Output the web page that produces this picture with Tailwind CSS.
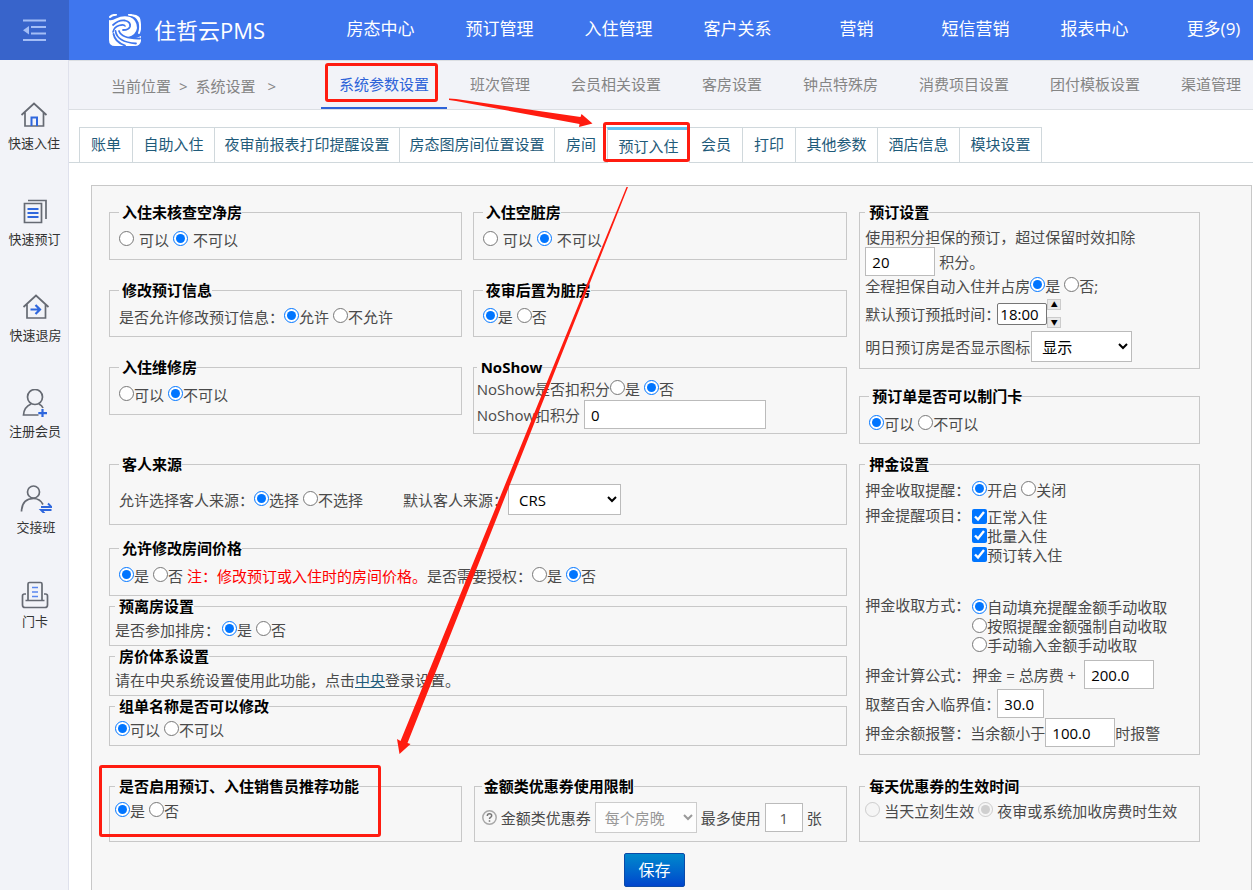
<!DOCTYPE html>
<html lang="zh-CN">
  <head>
    <meta charset="UTF-8" />
    <meta name="viewport" content="width=device-width, initial-scale=1.0" />
    <title>住哲云PMS - 系统参数设置</title>
    <script src="https://cdn.jsdelivr.net/npm/@tailwindcss/browser@4"></script>
  </head>
  <body
    class="relative flex flex-col h-screen overflow-hidden bg-white text-[15px] leading-[22px] text-[#4a4a4a] whitespace-nowrap font-['Open_Sans','Noto_Sans_CJK_SC',sans-serif]"
  >
    <!-- header -->
    <header class="flex items-center h-[60px] shrink-0 bg-[#3f76ee] text-white">
      <button class="flex items-center justify-center w-[69px] h-full shrink-0 bg-[#3864cb]" aria-label="收起菜单">
        <svg class="w-6 h-6" viewBox="0 0 24 24" fill="none" stroke="#a3bdf6" stroke-width="1.8">
          <path d="M0 2.500h23M8 9h15M8 15.500h15M0 22h23" />
          <path d="M6 8v8.500L0 12.200z" fill="#a3bdf6" stroke="none" />
        </svg>
      </button>
      <a href="#" class="flex items-center gap-[13px] w-[252px] pl-10 shrink-0">
        <svg class="w-8 h-8" viewBox="0 0 32 32" fill="none" stroke-linecap="round">
          <path d="M0 6Q3 7 7 4.500Q14 1 21 3Q28 6 28 14Q27 21 19 23Q25 26 32 22V27Q31 32 26 32H6Q0 32 0 26z" fill="#fff" />
          <path d="M1 3Q3 0.800 7 0.800M20 0.800Q28 1 30.500 8Q32 14 30 19" stroke="#fff" stroke-width="2" />
          <path d="M24 0.500Q31 1 31.500 6V22Q32 14 30 8Q28 3 24 0.500z" fill="#fff" />
          <path d="M4 11Q10 5.500 16 6.500Q22 8 21 12.500Q20 16 14 16" stroke="#3f76ee" stroke-width="1.800" />
          <path d="M4 18Q5 13 10 11.500Q15 10 16 12" stroke="#3f76ee" stroke-width="1.600" />
          <path d="M10 17Q13 25 31 24.500" stroke="#3f76ee" stroke-width="1.800" />
          <path d="M6.500 17Q8 28 27 29.500" stroke="#3f76ee" stroke-width="1.800" />
          <path d="M4.500 20Q6 28 16 31.500" stroke="#3f76ee" stroke-width="1.800" />
        </svg>
        <span class="text-[22px] leading-[30px]">住哲云PMS</span>
      </a>
      <nav class="flex text-[17px] leading-5 pb-0.5 text-center">
        <a href="#" class="w-[119px] shrink-0">房态中心</a>
        <a href="#" class="w-[119px] shrink-0">预订管理</a>
        <a href="#" class="w-[119px] shrink-0">入住管理</a>
        <a href="#" class="w-[119px] shrink-0">客户关系</a>
        <a href="#" class="w-[119px] shrink-0">营销</a>
        <a href="#" class="w-[119px] shrink-0">短信营销</a>
        <a href="#" class="w-[119px] shrink-0">报表中心</a>
        <a href="#" class="w-[119px] shrink-0">更多(9)</a>
      </nav>
    </header>

    <div class="flex flex-1 min-h-0">
      <!-- sidebar -->
      <aside class="flex flex-col gap-[44px] w-[69px] shrink-0 pt-[41px] bg-[#f2f3f8] border-r border-[#dfe1ec] text-[13px] leading-5 text-[#333]">
        <a href="#" class="flex flex-col items-center gap-1">
          <svg class="w-7 h-7" viewBox="0 0 28 28" fill="none" stroke="#666a73" stroke-width="1.700">
            <path d="M1.500 14L14 2.500L26.500 14M5 11.500V25H23.500V11.500" />
            <path d="M11.500 25V16.500H17V25" stroke="#2f67dd" stroke-width="2" />
          </svg>
          快速入住
        </a>
        <a href="#" class="flex flex-col items-center gap-1 pl-px">
          <svg class="w-7 h-7" viewBox="0 0 28 28" fill="none" stroke="#666a73" stroke-width="1.700">
            <path d="M3.500 6.500H20.500V25.500H3.500zM7 3.500H25V22" />
            <path d="M6.500 12H17.500M6.500 16H17.500M6.500 20H17.500" stroke="#2f67dd" stroke-width="2" />
          </svg>
          快速预订
        </a>
        <a href="#" class="flex flex-col items-center gap-1 pl-[3px]">
          <svg class="w-7 h-7" viewBox="0 0 28 28" fill="none" stroke="#666a73" stroke-width="1.700">
            <path d="M1.500 14L14 2.500L26.500 14M5 11.500V25H23.500V11.500" />
            <path d="M8.500 16.500H17.500M13.500 12L18 16.500L13.500 21" stroke="#2f67dd" stroke-width="2.200" />
          </svg>
          快速退房
        </a>
        <a href="#" class="flex flex-col items-center gap-1 pl-0.5">
          <svg class="w-7 h-7" viewBox="0 0 28 28" fill="none" stroke="#666a73" stroke-width="1.700">
            <circle cx="14" cy="8" r="7.500" />
            <path d="M10 15Q3 18 2.500 26H17.500M18 15Q21 16.500 22 19" />
            <path d="M21.500 20V28M17.300 24.200H26" stroke="#2f67dd" stroke-width="2.200" />
          </svg>
          注册会员
        </a>
        <a href="#" class="flex flex-col items-center gap-1 pl-1">
          <svg class="w-8 h-7" viewBox="0 0 32 28" fill="none" stroke="#666a73" stroke-width="1.700">
            <circle cx="13.500" cy="7" r="6" />
            <path d="M1.500 26.500Q2 13.500 13.500 13.500Q20 13.500 23 19.500" />
            <path d="M21 22H31.500L28 18.500M31.500 25H21L24.500 28.500" stroke="#2f67dd" stroke-width="1.900" />
          </svg>
          交接班
        </a>
        <a href="#" class="flex flex-col items-center gap-0.5 pl-0.5">
          <svg class="w-7 h-7" viewBox="0 0 28 28" fill="none" stroke="#666a73" stroke-width="1.700">
            <path d="M5 13H3.500Q1.500 13 1.500 15V24Q1.500 26.500 4 26.500H24Q26.500 26.500 26.500 24V15Q26.500 13 24.500 13H23" />
            <path d="M4.500 19.500H23.500M7 19.500V3Q7 1.500 8.500 1.500H19.500Q21 1.500 21 3V19.500" />
            <path d="M11 6.500H17M11 11H17M11 15.500H17" stroke="#5a86ee" />
          </svg>
          门卡
        </a>
      </aside>

      <main class="flex flex-col flex-1 min-w-0">
        <!-- breadcrumb and module tabs -->
        <div class="flex h-[50px] shrink-0 bg-[#f2f3f8] border-y border-[#dcdfe3] text-[#858585]">
          <div class="flex items-center w-[252px] shrink-0 pl-[42px] pt-0.5">
            <span>当前位置</span><span class="mx-2">&gt;</span><span>系统设置</span><span class="ml-3">&gt;</span>
          </div>
          <nav class="flex gap-[5px] leading-[46px]">
            <a href="#" class="px-[18px] border-b-2 border-[#2d63d8] text-[#2d63d8]">系统参数设置</a>
            <a href="#" class="px-[18px]">班次管理</a>
            <a href="#" class="px-[18px]">会员相关设置</a>
            <a href="#" class="px-[18px]">客房设置</a>
            <a href="#" class="px-[18px]">钟点特殊房</a>
            <a href="#" class="px-[18px]">消费项目设置</a>
            <a href="#" class="px-[18px]">团付模板设置</a>
            <a href="#" class="px-[18px]">渠道管理</a>
          </nav>
        </div>

        <!-- parameter tabs -->
        <nav class="flex h-9 shrink-0 mt-[17px] pl-[10px] border-b border-[#d0d8dc] text-center text-[#1f5b7a] leading-8">
          <a href="#" class="w-[53px] border-t border-l border-[#d0d8dc]">账单</a>
          <a href="#" class="w-[82px] border-t border-l border-[#d0d8dc]">自助入住</a>
          <a href="#" class="w-[185px] border-t border-l border-[#d0d8dc]">夜审前报表打印提醒设置</a>
          <a href="#" class="w-[155px] border-t border-l border-[#d0d8dc]">房态图房间位置设置</a>
          <a href="#" class="w-[53px] border-t border-l border-[#d0d8dc]">房间</a>
          <a href="#" class="w-[82px] h-9 bg-white border-t-3 border-t-[#62c1ef] border-l border-l-[#d0d8dc]">预订入住</a>
          <a href="#" class="w-[53px] border-t border-l border-[#d0d8dc]">会员</a>
          <a href="#" class="w-[53px] border-t border-l border-[#d0d8dc]">打印</a>
          <a href="#" class="w-[82px] border-t border-l border-[#d0d8dc]">其他参数</a>
          <a href="#" class="w-[82px] border-t border-l border-[#d0d8dc]">酒店信息</a>
          <a href="#" class="w-[83px] border-t border-x border-[#d0d8dc]">模块设置</a>
        </nav>

        <!-- settings form -->
        <form class="shrink-0 mt-[22px] ml-[22px] mr-px pt-4 pl-[17px] pr-[51px] pb-10 bg-[#f7f7f7] border border-[#c8c8c8]">
          <div class="grid grid-cols-[739fr_341fr] gap-3 items-start">
            <div class="min-w-0">
              <div class="grid grid-cols-[353fr_375fr] gap-x-[11px] gap-y-5 items-start">
                <fieldset class="min-w-0 border border-[#c8c8c8] pl-[9px] pt-[6px] pb-2">
                  <legend class="pl-[3px] font-bold leading-[21px] text-black">入住未核查空净房</legend>
                  <div class="flex items-center">
                    <label class="flex items-center gap-[5px] mr-1"><input type="radio" name="clean" class="size-[15px] mb-[3px]" />可以</label>
                    <label class="flex items-center gap-[5px]"><input type="radio" name="clean" class="size-[15px] mb-[3px]" checked />不可以</label>
                  </div>
                </fieldset>
                <fieldset class="min-w-0 border border-[#c8c8c8] pl-[9px] pt-[6px] pb-2">
                  <legend class="pl-[3px] font-bold leading-[21px] text-black">入住空脏房</legend>
                  <div class="flex items-center">
                    <label class="flex items-center gap-[5px] mr-1"><input type="radio" name="dirty" class="size-[15px] mb-[3px]" />可以</label>
                    <label class="flex items-center gap-[5px]"><input type="radio" name="dirty" class="size-[15px] mb-[3px]" checked />不可以</label>
                  </div>
                </fieldset>

                <fieldset class="min-w-0 border border-[#c8c8c8] pl-[9px] pt-[5px] pb-2">
                  <legend class="pl-[3px] font-bold leading-[21px] text-black">修改预订信息</legend>
                  <div class="flex items-center">
                    <span>是否允许修改预订信息：</span>
                    <label class="flex items-center mr-1"><input type="radio" name="edit" class="size-[15px] mb-[3px]" checked />允许</label>
                    <label class="flex items-center"><input type="radio" name="edit" class="size-[15px] mb-[3px]" />不允许</label>
                  </div>
                </fieldset>
                <fieldset class="min-w-0 border border-[#c8c8c8] pl-[9px] pt-[5px] pb-2">
                  <legend class="pl-[3px] font-bold leading-[21px] text-black">夜审后置为脏房</legend>
                  <div class="flex items-center">
                    <label class="flex items-center mr-1"><input type="radio" name="audit" class="size-[15px] mb-[3px]" checked />是</label>
                    <label class="flex items-center"><input type="radio" name="audit" class="size-[15px] mb-[3px]" />否</label>
                  </div>
                </fieldset>

                <fieldset class="min-w-0 border border-[#c8c8c8] pl-[9px] pt-[6px] pb-2">
                  <legend class="pl-[3px] font-bold leading-[21px] text-black">入住维修房</legend>
                  <div class="flex items-center">
                    <label class="flex items-center mr-1"><input type="radio" name="repair" class="size-[15px] mb-[3px]" />可以</label>
                    <label class="flex items-center"><input type="radio" name="repair" class="size-[15px] mb-[3px]" checked />不可以</label>
                  </div>
                </fieldset>
                <fieldset class="min-w-0 border border-[#c8c8c8] pl-[3px] pb-1">
                  <legend class="pl-1 font-bold leading-[21px] text-black">NoShow</legend>
                  <div class="flex items-center">
                    <span>NoShow是否扣积分</span>
                    <label class="flex items-center mr-1"><input type="radio" name="noshow" class="size-[15px] mb-[3px]" />是</label>
                    <label class="flex items-center"><input type="radio" name="noshow" class="size-[15px] mb-[3px]" checked />否</label>
                  </div>
                  <div class="flex items-center gap-1">
                    <label for="noshow-points">NoShow扣积分</label>
                    <input id="noshow-points" type="text" value="0" class="w-[182px] h-[29px] px-[6px] bg-white border border-[#bbb] text-black" />
                  </div>
                </fieldset>
              </div>

              <fieldset class="min-w-0 mt-5 border border-[#c8c8c8] pl-[9px] py-[9px]">
                <legend class="pl-[3px] font-bold leading-[21px] text-black">客人来源</legend>
                <div class="flex items-center">
                  <span>允许选择客人来源：</span>
                  <label class="flex items-center mr-1"><input type="radio" name="source" class="size-[15px] mb-[3px]" checked />选择</label>
                  <label class="flex items-center"><input type="radio" name="source" class="size-[15px] mb-[3px]" />不选择</label>
                  <label for="default-source" class="ml-10">默认客人来源：</label>
                  <select id="default-source" class="w-[113px] h-[31px] px-[6px] bg-white border border-[#bbb] text-black">
                    <option>CRS</option>
                  </select>
                </div>
              </fieldset>

              <fieldset class="min-w-0 mt-[13px] border border-[#c8c8c8] pl-[9px] pt-[6px] pb-2">
                <legend class="pl-[3px] font-bold leading-[21px] text-black">允许修改房间价格</legend>
                <div class="flex items-center">
                  <label class="flex items-center mr-1"><input type="radio" name="price" class="size-[15px] mb-[3px]" checked />是</label>
                  <label class="flex items-center mr-1"><input type="radio" name="price" class="size-[15px] mb-[3px]" />否</label>
                  <span class="text-[#ff0000]">注：修改预订或入住时的房间价格。</span>
                  <span>是否需要授权：</span>
                  <label class="flex items-center mr-1"><input type="radio" name="auth" class="size-[15px] mb-[3px]" />是</label>
                  <label class="flex items-center"><input type="radio" name="auth" class="size-[15px] mb-[3px]" checked />否</label>
                </div>
              </fieldset>

              <fieldset class="min-w-0 border border-[#c8c8c8] pl-[5px] pt-0.5 pb-1">
                <legend class="pl-1 font-bold leading-[21px] text-black">预离房设置</legend>
                <div class="flex items-center">
                  <span class="mr-0.5">是否参加排房：</span>
                  <label class="flex items-center mr-1"><input type="radio" name="leave" class="size-[15px] mb-[3px]" checked />是</label>
                  <label class="flex items-center"><input type="radio" name="leave" class="size-[15px] mb-[3px]" />否</label>
                </div>
              </fieldset>

              <fieldset class="min-w-0 border border-[#c8c8c8] pl-[5px] pt-0.5 pb-1">
                <legend class="pl-1 font-bold leading-[21px] text-black">房价体系设置</legend>
                <p>请在中央系统设置使用此功能，点击<a href="#" class="text-[#1f5b7a] underline">中央</a>登录设置。</p>
              </fieldset>

              <fieldset class="min-w-0 border border-[#c8c8c8] pl-[5px] pt-0.5 pb-1">
                <legend class="pl-1 font-bold leading-[21px] text-black">组单名称是否可以修改</legend>
                <div class="flex items-center">
                  <label class="flex items-center mr-1"><input type="radio" name="group" class="size-[15px] mb-[3px]" checked />可以</label>
                  <label class="flex items-center"><input type="radio" name="group" class="size-[15px] mb-[3px]" />不可以</label>
                </div>
              </fieldset>
            </div>

            <div class="min-w-0">
              <fieldset class="min-w-0 border border-[#c8c8c8] pl-[5px] pt-1 pb-[6px]">
                <legend class="pl-1 font-bold leading-[21px] text-black">预订设置</legend>
                <label for="points" class="block leading-5">使用积分担保的预订，超过保留时效扣除</label>
                <div class="flex items-center gap-1">
                  <input id="points" type="text" value="20" class="w-[70px] h-[29px] px-[6px] bg-white border border-[#bbb] text-black" />
                  <span>积分。</span>
                </div>
                <div class="flex items-center leading-5">
                  <span>全程担保自动入住并占房</span>
                  <label class="flex items-center mr-1"><input type="radio" name="guarantee" class="size-[15px] mb-[3px]" checked />是</label>
                  <label class="flex items-center"><input type="radio" name="guarantee" class="size-[15px] mb-[3px]" />否;</label>
                </div>
                <div class="flex items-center h-[35px]">
                  <label for="arrive" class="w-[132px]">默认预订预抵时间：</label>
                  <input id="arrive" type="text" value="18:00" class="w-[50px] h-[22px] px-0.5 bg-white border border-[#767676] rounded-xs text-black" />
                  <div class="flex flex-col gap-[7px] text-[7px] leading-[9px] text-black">
                    <button type="button" aria-label="增加" class="w-[14px] h-[11px] bg-[#e9e9e9] border border-[#ccc]">▲</button>
                    <button type="button" aria-label="减少" class="w-[14px] h-[11px] bg-[#e9e9e9] border border-[#ccc]">▼</button>
                  </div>
                </div>
                <div class="flex items-center">
                  <label for="tomorrow">明日预订房是否显示图标</label>
                  <select id="tomorrow" class="w-[101px] h-[31px] ml-px px-[6px] bg-white border border-[#bbb] text-black">
                    <option>显示</option>
                  </select>
                </div>
              </fieldset>

              <fieldset class="min-w-0 mt-[17px] border border-[#c8c8c8] pl-[9px] pt-[6px] pb-2">
                <legend class="pl-[3px] font-bold leading-[21px] text-black">预订单是否可以制门卡</legend>
                <div class="flex items-center">
                  <label class="flex items-center mr-1"><input type="radio" name="card" class="size-[15px] mb-[3px]" checked />可以</label>
                  <label class="flex items-center"><input type="radio" name="card" class="size-[15px] mb-[3px]" />不可以</label>
                </div>
              </fieldset>

              <fieldset class="min-w-0 mt-[10px] border border-[#c8c8c8] pl-[5px] pt-1 pb-[7px]">
                <legend class="pl-1 font-bold leading-[21px] text-black">押金设置</legend>
                <div class="flex items-center">
                  <span class="w-[107px]">押金收取提醒：</span>
                  <label class="flex items-center mr-1"><input type="radio" name="remind" class="size-[15px] mb-[3px]" checked />开启</label>
                  <label class="flex items-center"><input type="radio" name="remind" class="size-[15px] mb-[3px]" />关闭</label>
                </div>
                <div class="flex mt-[3px]">
                  <span class="w-[107px]">押金提醒项目：</span>
                  <div class="pt-1 leading-[19px]">
                    <label class="flex items-center"><input type="checkbox" class="size-[15px] mb-[3px]" checked />正常入住</label>
                    <label class="flex items-center"><input type="checkbox" class="size-[15px] mb-[3px]" checked />批量入住</label>
                    <label class="flex items-center"><input type="checkbox" class="size-[15px] mb-[3px]" checked />预订转入住</label>
                  </div>
                </div>
                <div class="flex mt-[29px]">
                  <span class="w-[107px]">押金收取方式：</span>
                  <div class="pt-1 leading-[19px]">
                    <label class="flex items-center"><input type="radio" name="method" class="size-[15px] mb-[3px]" checked />自动填充提醒金额手动收取</label>
                    <label class="flex items-center"><input type="radio" name="method" class="size-[15px] mb-[3px]" />按照提醒金额强制自动收取</label>
                    <label class="flex items-center"><input type="radio" name="method" class="size-[15px] mb-[3px]" />手动输入金额手动收取</label>
                  </div>
                </div>
                <div class="flex items-center mt-[5px]">
                  <span class="w-[107px]">押金计算公式：</span>
                  <label for="formula">押金 = 总房费 +</label>
                  <input id="formula" type="text" value="200.0" class="w-[70px] h-[29px] ml-2 px-[6px] bg-white border border-[#bbb] text-black" />
                </div>
                <div class="flex items-center">
                  <label for="round" class="w-[132px]">取整百舍入临界值：</label>
                  <input id="round" type="text" value="30.0" class="w-[47px] h-[29px] px-[6px] bg-white border border-[#bbb] text-black" />
                </div>
                <div class="flex items-center">
                  <label for="alarm">押金余额报警：当余额小于</label>
                  <input id="alarm" type="text" value="100.0" class="w-[70px] h-[29px] px-[6px] bg-white border border-[#bbb] text-black" />
                  <span>时报警</span>
                </div>
              </fieldset>
            </div>
          </div>

          <div class="grid grid-cols-[353fr_374fr_341fr] gap-3 mt-[21px]">
            <fieldset class="min-w-0 border border-[#c8c8c8] pl-[5px] pt-[3px]">
              <legend class="pl-1 font-bold leading-[21px] text-black">是否启用预订、入住销售员推荐功能</legend>
              <div class="flex items-center">
                <label class="flex items-center mr-1"><input type="radio" name="sales" class="size-[15px] mb-[3px]" checked />是</label>
                <label class="flex items-center"><input type="radio" name="sales" class="size-[15px] mb-[3px]" />否</label>
              </div>
            </fieldset>
            <fieldset class="min-w-0 border border-[#c8c8c8] pl-[7px] pt-[5px] pb-2">
              <legend class="pl-0.5 font-bold leading-[21px] text-black">金额类优惠券使用限制</legend>
              <div class="flex items-center gap-1">
                <svg class="w-[15px] h-[15px] shrink-0" viewBox="0 0 15 15" fill="none" stroke="#a8a8a8" stroke-width="1.500">
                  <circle cx="7.500" cy="7.500" r="6.700" />
                  <path d="M5.300 6Q5.300 3.800 7.500 3.800T9.700 5.800Q9.700 6.800 8.500 7.400Q7.500 8 7.500 9M7.500 10.200V11.800" stroke="#777" />
                </svg>
                <label for="coupon">金额类优惠券</label>
                <select id="coupon" disabled class="w-[102px] h-[31px] px-[5px] bg-[#fdfdfd] border border-[#ccc] text-[#999]">
                  <option>每个房晚</option>
                </select>
                <label for="coupon-max">最多使用</label>
                <input id="coupon-max" type="text" value="1" disabled class="w-[38px] h-[29px] bg-white border border-[#bbb] text-center text-[#545454]" />
                <span>张</span>
              </div>
            </fieldset>
            <fieldset class="min-w-0 border border-[#c8c8c8] pl-[5px] pt-[3px]">
              <legend class="pl-1 font-bold leading-[21px] text-black">每天优惠券的生效时间</legend>
              <div class="flex items-center">
                <label class="flex items-center gap-1 mr-1"><input type="radio" name="effect" class="size-[15px] mb-[3px]" disabled />当天立刻生效</label>
                <label class="flex items-center gap-1"><input type="radio" name="effect" class="size-[15px] mb-[3px]" disabled checked />夜审或系统加收房费时生效</label>
              </div>
            </fieldset>
          </div>

          <div class="flex justify-center mt-[11px]">
            <button type="button" class="w-[61px] h-[34px] text-base text-white bg-linear-to-b from-[#0088cc] to-[#0044cc] border border-[#0a4aa8] rounded-xs">保存</button>
          </div>
        </form>
      </main>
    </div>

    <!-- step markers drawn over the page -->
    <svg class="absolute top-0 left-0 w-[1253px] h-[890px] pointer-events-none" viewBox="0 0 1253 890" fill="none" stroke="#ff1c10" stroke-width="3">
      <rect x="326.500" y="64.500" width="110" height="36" rx="1.500" />
      <rect x="604.500" y="123.500" width="84" height="37" rx="1.500" />
      <rect x="100.500" y="766.500" width="279" height="69" rx="1.500" />
      <path d="M449 98.500L456 99L580.500 117L581.500 114L592.500 123.500L579 127L579.500 124L456 101L449 100Z" fill="#ff1c10" stroke="none" />
      <path d="M626.500 187H628L407.500 743L410.500 744L399.500 754L397 739L400.500 741Z" fill="#ff1c10" stroke="none" />
    </svg>
  </body>
</html>
